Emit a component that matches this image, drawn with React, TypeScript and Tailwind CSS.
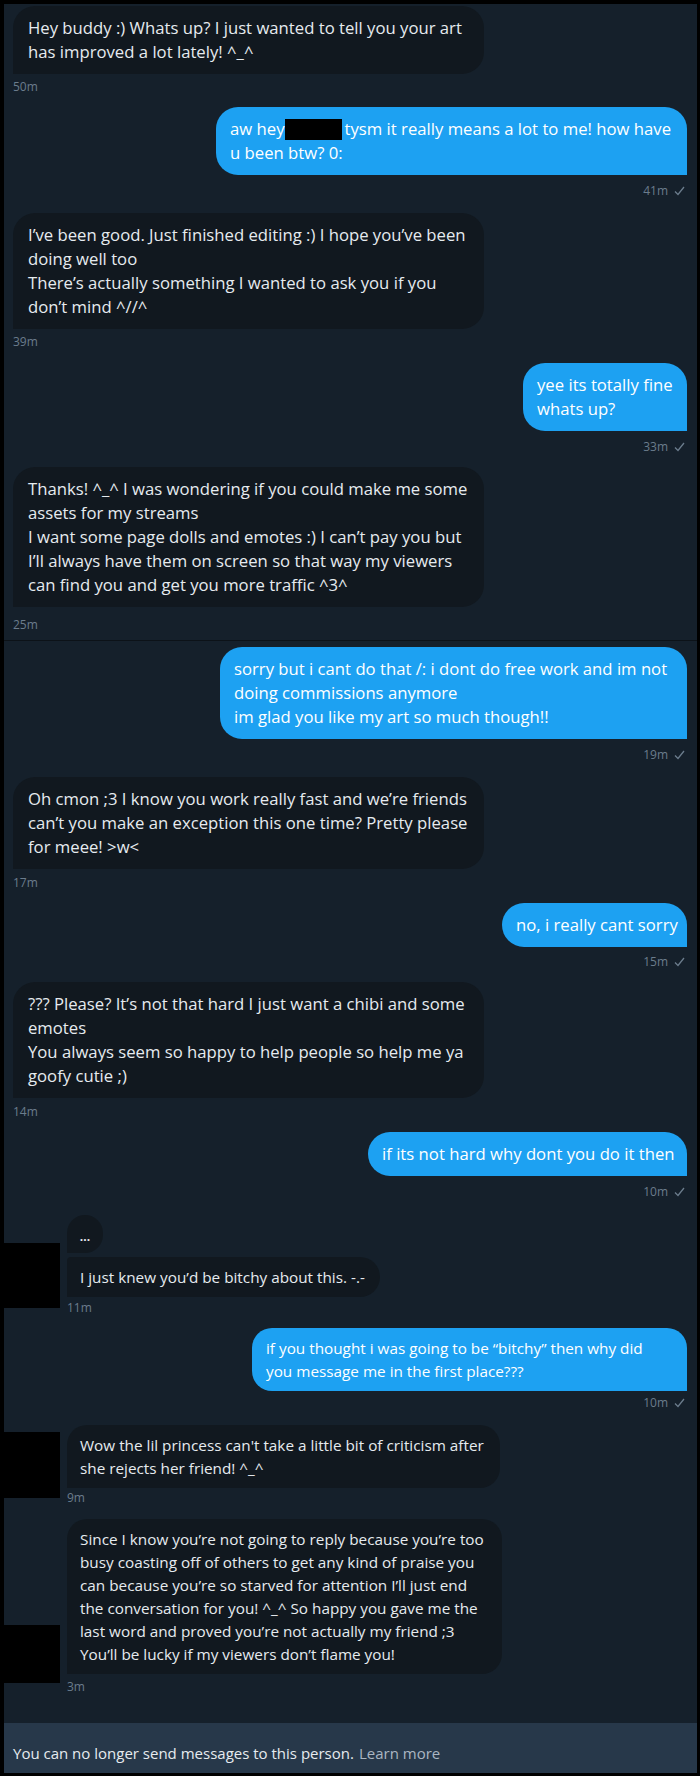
import type { ReactNode } from "react";

type Side = "in" | "out";

const upperIn =
  "bg-[#11181f] text-[#e6ebef] rounded-[22px] rounded-bl-none pl-[15px] py-[10px] text-[16.7px] leading-[24px]";
const upperOut =
  "bg-[#1da1f2] text-white rounded-[22px] rounded-br-none pl-[14px] py-[10px] text-[16.7px] leading-[24px]";
const lowerIn =
  "bg-[#11181f] text-[#e6ebef] rounded-[20px] rounded-bl-none pl-[13px] py-[8.5px] text-[15.3px] leading-[23px]";
const lowerOut =
  "bg-[#1da1f2] text-white rounded-[20px] rounded-br-none pl-[14px] py-[8.5px] text-[15.3px] leading-[23px]";

function Check() {
  return (
    <svg width="11" height="10" viewBox="0 0 11 10" fill="none" className="ml-[6px]">
      <path d="M1 5.5 L4 8.5 L10 1" stroke="#6b7c8c" strokeWidth="1.3" />
    </svg>
  );
}

function Time({ t, side, mt }: { t: string; side: Side; mt: string }) {
  return (
    <div
      className={`${mt} flex items-center text-[12px] leading-[16px] text-[#6b7c8c] ${
        side === "out" ? "self-end pr-[2px]" : "self-start"
      }`}
    >
      {t}
      {side === "out" && <Check />}
    </div>
  );
}

function Lines({ lines }: { lines: ReactNode[] }) {
  return (
    <>
      {lines.map((l, i) => (
        <div key={i} className="whitespace-nowrap">
          {l}
        </div>
      ))}
    </>
  );
}

function Msg({
  side,
  lines,
  time,
  box,
  mt,
  timeMt,
}: {
  side: Side;
  lines: ReactNode[];
  time: string;
  box: string;
  mt: string;
  timeMt: string;
}) {
  return (
    <div className={`${mt} flex flex-col ${side === "out" ? "items-end" : "items-start"}`}>
      <div className={box}>
        <Lines lines={lines} />
      </div>
      <Time t={time} side={side} mt={timeMt} />
    </div>
  );
}

export default function App() {
  return (
    <div className="w-[700px] h-[1776px] bg-black pt-[4px] pl-[4px] pr-[3px] pb-[3px] font-['Open_Sans',sans-serif]">
      <div className="h-full bg-[#15202b] flex flex-col">
        <div className="flex-1 flex flex-col pl-[9px] pr-[10px]">
          <Msg
            side="in"
            mt="mt-[2px]"
            timeMt="mt-[5px]"
            box={`${upperIn} w-[471px]`}
            time="50m"
            lines={["Hey buddy :) Whats up? I just wanted to tell you your art", "has improved a lot lately! ^_^"]}
          />
          <Msg
            side="out"
            mt="mt-[12px]"
            timeMt="mt-[8px]"
            box={`${upperOut} w-[471px]`}
            time="41m"
            lines={[
              <span className="flex items-center">
                aw hey
                <span className="w-[57px] h-[21px] bg-black" />
                <span className="ml-[3px]">tysm it really means a lot to me! how have</span>
              </span>,
              "u been btw? 0:",
            ]}
          />
          <Msg
            side="in"
            mt="mt-[14px]"
            timeMt="mt-[5px]"
            box={`${upperIn} w-[471px]`}
            time="39m"
            lines={[
              "I’ve been good. Just finished editing :) I hope you’ve been",
              "doing well too",
              "There’s actually something I wanted to ask you if you",
              "don’t mind ^//^",
            ]}
          />
          <Msg
            side="out"
            mt="mt-[13px]"
            timeMt="mt-[8px]"
            box={`${upperOut} w-[164px]`}
            time="33m"
            lines={["yee its totally fine", "whats up?"]}
          />
          <Msg
            side="in"
            mt="mt-[12px]"
            timeMt="mt-[10px]"
            box={`${upperIn} w-[471px]`}
            time="25m"
            lines={[
              "Thanks! ^_^ I was wondering if you could make me some",
              "assets for my streams",
              "I want some page dolls and emotes :) I can’t pay you but",
              "I’ll always have them on screen so that way my viewers",
              "can find you and get you more traffic ^3^",
            ]}
          />

          {/* stitch line between the two screenshots */}
          <div className="mt-[7px] -ml-[9px] -mr-[10px] h-[1px] bg-[#0c1218]" />

          <Msg
            side="out"
            mt="mt-[6px]"
            timeMt="mt-[8px]"
            box={`${upperOut} w-[467px]`}
            time="19m"
            lines={[
              "sorry but i cant do that /: i dont do free work and im not",
              "doing commissions anymore",
              "im glad you like my art so much though!!",
            ]}
          />
          <Msg
            side="in"
            mt="mt-[14px]"
            timeMt="mt-[6px]"
            box={`${upperIn} w-[471px]`}
            time="17m"
            lines={[
              "Oh cmon ;3 I know you work really fast and we’re friends",
              "can’t you make an exception this one time? Pretty please",
              "for meee! >w<",
            ]}
          />
          <Msg
            side="out"
            mt="mt-[12px]"
            timeMt="mt-[7px]"
            box={`${upperOut} w-[185px]`}
            time="15m"
            lines={["no, i really cant sorry"]}
          />
          <Msg
            side="in"
            mt="mt-[12px]"
            timeMt="mt-[6px]"
            box={`${upperIn} w-[471px]`}
            time="14m"
            lines={[
              "??? Please? It’s not that hard I just want a chibi and some",
              "emotes",
              "You always seem so happy to help people so help me ya",
              "goofy cutie ;)",
            ]}
          />
          <Msg
            side="out"
            mt="mt-[12px]"
            timeMt="mt-[8px]"
            box={`${upperOut} w-[319px]`}
            time="10m"
            lines={["if its not hard why dont you do it then"]}
          />

          {/* lower screenshot, with the avatar blacked out */}
          <div className="mt-[15px] -ml-[9px] flex items-end gap-[7px]">
            <div className="w-[56px] h-[65px] bg-black mb-[8px]" />
            <div className="flex flex-col items-start">
              <div className="w-[36px] h-[38px] bg-[#11181f] rounded-t-[18px] rounded-br-[18px] flex items-center justify-center text-[#e6ebef] text-[12px] font-bold leading-none pt-[6px]">
                ...
              </div>
              <div className={`${lowerIn} rounded-tl-[4px] w-[313px] mt-[4px]`}>
                <Lines lines={["I just knew you’d be bitchy about this. -.-"]} />
              </div>
              <Time t="11m" side="in" mt="mt-[3px]" />
            </div>
          </div>

          <Msg
            side="out"
            mt="mt-[12px]"
            timeMt="mt-[4px]"
            box={`${lowerOut} w-[435px]`}
            time="10m"
            lines={["if you thought i was going to be “bitchy” then why did", "you message me in the first place???"]}
          />

          <div className="mt-[14px] -ml-[9px] flex items-end gap-[7px]">
            <div className="w-[56px] h-[66px] bg-black mb-[8px]" />
            <div className="flex flex-col items-start">
              <div className={`${lowerIn} w-[433px]`}>
                <Lines lines={["Wow the lil princess can't take a little bit of criticism after", "she rejects her friend! ^_^"]} />
              </div>
              <Time t="9m" side="in" mt="mt-[2px]" />
            </div>
          </div>

          <div className="mt-[13px] -ml-[9px] flex items-end gap-[7px]">
            <div className="w-[56px] h-[58px] bg-black mb-[12px]" />
            <div className="flex flex-col items-start">
              <div className={`${lowerIn} w-[435px]`}>
                <Lines
                  lines={[
                    "Since I know you’re not going to reply because you’re too",
                    "busy coasting off of others to get any kind of praise you",
                    "can because you’re so starved for attention I’ll just end",
                    "the conversation for you! ^_^ So happy you gave me the",
                    "last word and proved you’re not actually my friend ;3",
                    "You’ll be lucky if my viewers don’t flame you!",
                  ]}
                />
              </div>
              <Time t="3m" side="in" mt="mt-[5px]" />
            </div>
          </div>
        </div>

        <div className="h-[50px] bg-[#27384a] flex items-center pl-[9px] pt-[10px] text-[15px] leading-[20px] whitespace-nowrap">
          <span className="text-[#e6ebef]">You can no longer send messages to this person.</span>
          <span className="ml-[5px] text-[#aab6c2]">Learn more</span>
        </div>
      </div>
    </div>
  );
}
